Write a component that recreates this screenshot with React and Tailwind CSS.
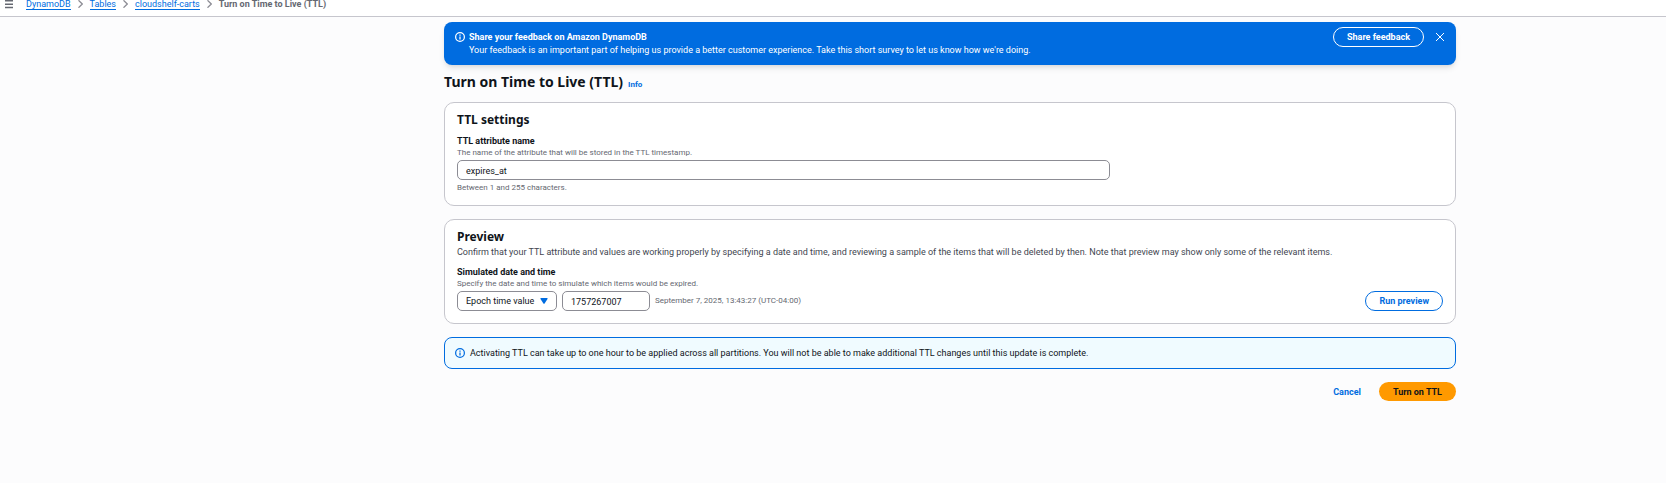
import React from "react";

function InfoIcon({ className }) {
  return (
    <svg viewBox="0 0 16 16" fill="none" stroke="currentColor" strokeWidth="2" className={`size-[10px] shrink-0 ${className}`} aria-hidden="true">
      <circle cx="8" cy="8" r="7" />
      <path d="M8 12V7M8 6V4" />
    </svg>
  );
}

function Chevron() {
  return (
    <svg viewBox="0 0 5 8" fill="none" stroke="#8c8c94" strokeWidth="1.3" className="h-2 w-[5px] shrink-0" aria-hidden="true">
      <path d="M0.5 0.3L4.3 4L0.5 7.7" />
    </svg>
  );
}

function Crumb({ children }) {
  return (
    <>
      <li className="flex">
        <a href="#" className="h-3 border-b border-[#006ce0] text-[#006ce0]">{children}</a>
      </li>
      <li className="flex"><Chevron /></li>
    </>
  );
}

function Card({ children }) {
  return <section className="rounded-[10px] border border-[#c6c6cd] bg-white px-3">{children}</section>;
}

export default function App() {
  return (
    <div className="min-h-screen bg-[#fcfcfd] font-[Roboto,'Noto_Sans',sans-serif] text-[9px] leading-3 text-[#0f141a]">
      <header className="flex h-[17px] items-start gap-3 border-b border-[#c6c6cd] bg-white pl-1">
        <button aria-label="Open navigation" className="flex text-[#656871]">
          <svg viewBox="0 0 10 9" fill="none" stroke="currentColor" strokeWidth="1.4" className="h-[9px] w-[10px]">
            <path d="M1 0.8H9M1 4.2H9M1 7.5H9" />
          </svg>
        </button>
        <nav aria-label="Breadcrumbs" className="-mt-[2px]">
          <ol className="flex items-center gap-[7px]">
            <Crumb>DynamoDB</Crumb>
            <Crumb>Tables</Crumb>
            <Crumb>cloudshelf-carts</Crumb>
            <li className="font-bold text-[#656871]" aria-current="page">Turn on Time to Live (TTL)</li>
          </ol>
        </nav>
      </header>

      <main className="pl-[234px]">
        <div className="mx-auto max-w-[1012px] pt-[5px]">
          <div className="flex items-start rounded-lg bg-[#006ce0] px-[11px] pt-[5px] pb-2 text-white shadow-md">
            <InfoIcon className="mt-[5px] mr-1" />
            <div className="flex-1 pt-1 leading-[13px]">
              <p className="font-bold">Share your feedback on Amazon DynamoDB</p>
              <p>Your feedback is an important part of helping us provide a better customer experience. Take this short survey to let us know how we're doing.</p>
            </div>
            <button className="h-5 rounded-full border border-white px-[13px] font-bold">Share feedback</button>
            <button aria-label="Dismiss" className="ml-[11px] flex h-5 items-center">
              <svg viewBox="0 0 10 10" fill="none" stroke="currentColor" strokeWidth="1" className="size-[10px]">
                <path d="M1 1L9 9M9 1L1 9" />
              </svg>
            </button>
          </div>

          <div className="mt-2 flex items-baseline gap-[5px]">
            <h1 className="font-['Noto_Sans',sans-serif] text-[14px] leading-[18px] font-bold">Turn on Time to Live (TTL)</h1>
            <a href="#" className="text-[8px] font-bold text-[#006ce0]">Info</a>
          </div>

          <div className="mt-[11px] flex flex-col gap-[13px]">
            <Card>
              <h2 className="pt-[9px] font-['Noto_Sans',sans-serif] text-[12px] leading-4 font-bold">TTL settings</h2>
              <div className="pt-[7px] pb-3">
                <label htmlFor="attribute" className="block font-bold">TTL attribute name</label>
                <p className="text-[8px] leading-[11px] text-[#656871]">The name of the attribute that will be stored in the TTL timestamp.</p>
                <input id="attribute" defaultValue="expires_at" className="mt-[2px] block h-5 w-[653px] max-w-full rounded-[5px] border border-[#8c8c94] bg-white px-2 pt-px" />
                <p className="mt-[2px] text-[8px] leading-[11px] text-[#656871]">Between 1 and 255 characters.</p>
              </div>
            </Card>

            <Card>
              <h2 className="pt-[9px] font-['Noto_Sans',sans-serif] text-[12px] leading-4 font-bold">Preview</h2>
              <p className="pt-px text-[#424650]">Confirm that your TTL attribute and values are working properly by specifying a date and time, and reviewing a sample of the items that will be deleted by then. Note that preview may show only some of the relevant items.</p>
              <div className="pt-2 pb-3">
                <label htmlFor="format" className="block font-bold">Simulated date and time</label>
                <p className="text-[8px] leading-[11px] text-[#656871]">Specify the date and time to simulate which items would be expired.</p>
                <div className="mt-[2px] flex items-center gap-[5px]">
                  <div className="relative">
                    <select id="format" className="block h-5 w-[100px] appearance-none rounded-[5px] border border-[#8c8c94] bg-white px-2">
                      <option>Epoch time value</option>
                    </select>
                    <svg viewBox="0 0 8 6" className="pointer-events-none absolute top-[7px] right-[9px] h-[6px] w-2 fill-[#006ce0]" aria-hidden="true">
                      <path d="M1 0H7Q8 0 7.5 1L4.6 5.5Q4 6 3.4 5.5L0.5 1Q0 0 1 0Z" />
                    </svg>
                  </div>
                  <input aria-label="Epoch time" defaultValue="1757267007" className="h-5 w-[88px] rounded-[5px] border border-[#8c8c94] bg-white px-2 pt-px" />
                  <span className="text-[8px] text-[#656871]">September 7, 2025, 13:43:27 (UTC-04:00)</span>
                  <button className="ml-auto h-5 rounded-full border border-[#006ce0] px-[13px] font-bold text-[#006ce0]">Run preview</button>
                </div>
              </div>
            </Card>

            <div className="flex items-center gap-[5px] rounded-lg border border-[#006ce0] bg-[#f0fbff] px-[10px] py-[9px]">
              <InfoIcon className="text-[#006ce0]" />
              <p>Activating TTL can take up to one hour to be applied across all partitions. You will not be able to make additional TTL changes until this update is complete.</p>
            </div>

            <div className="flex justify-end gap-[5px] font-bold">
              <button className="h-[19px] px-[13px] text-[#006ce0]">Cancel</button>
              <button className="h-[19px] rounded-full bg-[#ff9900] px-[14px]">Turn on TTL</button>
            </div>
          </div>
        </div>
      </main>
    </div>
  );
}
